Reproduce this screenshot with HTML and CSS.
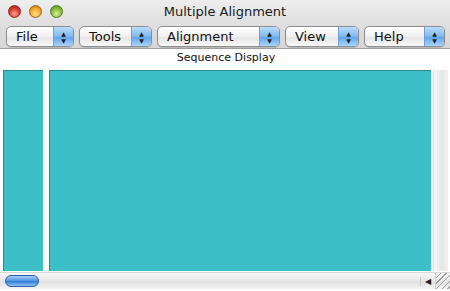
FILE: index.html
```html
<!DOCTYPE html>
<html lang="en">
<head>
  <meta charset="UTF-8" />
  <title>Multiple Alignment</title>
  <link rel="stylesheet" href="styles.css">
</head>
<body>
  <div class="window">
    <div class="titlebar">
      <div class="lights">
        <span class="light red"></span>
        <span class="light yellow"></span>
        <span class="light green"></span>
      </div>
      <div class="title">Multiple Alignment</div>
    </div>

    <div class="toolbar">
      <div class="popup w-file"><span class="label">File</span><span class="arrows">&#9650;<br>&#9660;</span></div>
      <div class="popup w-tools"><span class="label">Tools</span><span class="arrows">&#9650;<br>&#9660;</span></div>
      <div class="popup w-align"><span class="label">Alignment</span><span class="arrows">&#9650;<br>&#9660;</span></div>
      <div class="popup w-view"><span class="label">View</span><span class="arrows">&#9650;<br>&#9660;</span></div>
      <div class="popup w-help"><span class="label">Help</span><span class="arrows">&#9650;<br>&#9660;</span></div>
    </div>

    <div class="content">
      <div class="caption">Sequence Display</div>
      <div class="panels">
        <div class="panel names"></div>
        <div class="panel seqs"></div>
        <div class="vscroll"></div>
      </div>
      <div class="hscroll">
        <div class="thumb"></div>
        <div class="track"></div>
        <div class="arrow">&#9664;</div>
        <div class="grip"></div>
      </div>
    </div>
  </div>
</body>
</html>
```

FILE: styles.css
```css
/* Mac OS X style window */

body {
  margin: 0;
  font-family: "DejaVu Sans", "Liberation Sans", sans-serif;
  background: #ffffff;
}

.window {
  width: 450px;
  height: 291px;
  display: flex;
  flex-direction: column;
  overflow: hidden;
}

/* Title bar */
.titlebar {
  height: 22px;
  display: flex;
  align-items: center;
  position: relative;
  background: linear-gradient(#eeeeee, #e0e0e0);
}

.lights {
  display: flex;
  gap: 8px;
  padding: 1px 0 0 8px;
}

.light {
  width: 13px;
  height: 13px;
  border-radius: 50%;
  box-sizing: border-box;
}

.red {
  background: radial-gradient(circle at 50% 70%, #ff9c8c, #d1342a 60%, #9e1b12);
  border: 1px solid #8a2a22;
}

.yellow {
  background: radial-gradient(circle at 50% 70%, #ffe08a, #f0a024 60%, #b56d12);
  border: 1px solid #96661e;
}

.green {
  background: radial-gradient(circle at 50% 70%, #d6f29a, #7cb934 60%, #4d861a);
  border: 1px solid #4e7a22;
}

.title {
  position: absolute;
  left: 0;
  right: 0;
  top: 4px;
  text-align: center;
  font-size: 13px;
  color: #1a1a1a;
}

/* Toolbar with popup menus */
.toolbar {
  height: 27px;
  display: flex;
  align-items: flex-start;
  gap: 5px;
  padding: 4px 0 0 6px;
  box-sizing: border-box;
  background: linear-gradient(#e0e0e0, #d6d6d6);
  border-bottom: 1px solid #a0a0a0;
}

.popup {
  height: 21px;
  display: flex;
  box-sizing: border-box;
  border: 1px solid #8d8d8d;
  border-radius: 5px;
  background: linear-gradient(#ffffff, #f0f0f0 50%, #e4e4e4 51%, #f8f8f8);
  overflow: hidden;
  box-shadow: 0 1px 1px rgba(0, 0, 0, 0.15);
}

.label {
  flex: 1;
  font-size: 13px;
  line-height: 19px;
  padding-left: 9px;
  color: #111;
}

.arrows {
  width: 19px;
  font-size: 6px;
  line-height: 7px;
  padding-top: 3px;
  text-align: center;
  color: #1a1a1a;
  border-left: 1px solid #6f9fd6;
  background: linear-gradient(#bcdcfb, #7fb8f0 50%, #5ca2ea 51%, #a9d4fb);
}

.w-file { width: 68px; }
.w-tools { width: 73px; }
.w-align { width: 123px; }
.w-view { width: 74px; }
.w-help { width: 81px; }

/* Content */
.content {
  flex: 1;
  display: flex;
  flex-direction: column;
  background: #ffffff;
}

.caption {
  height: 21px;
  font-size: 11px;
  line-height: 17px;
  text-align: center;
  color: #111;
  margin-left: 2px;
}

.panels {
  display: flex;
  height: 201px;
  padding-left: 3px;
}

.panel {
  background: #3dbfc8;
  border-top: 1px solid #2a8a90;
  border-left: 1px solid #2a8a90;
  box-sizing: border-box;
}

.names {
  width: 40px;
}

.seqs {
  width: 382px;
  margin-left: 6px;
}

.vscroll {
  width: 14px;
  margin-left: 2px;
  background: linear-gradient(90deg, #f6f6f6, #e6e6e6 60%, #f2f2f2);
  border-left: 1px solid #e0e0e0;
}

.hscroll {
  height: 16px;
  margin-top: 1px;
  display: flex;
  align-items: center;
  background: linear-gradient(#f8f8f8, #e2e2e2 60%, #f4f4f4);
  border-top: 1px solid #d8d8d8;
}

.thumb {
  width: 34px;
  height: 12px;
  margin-left: 5px;
  border-radius: 6px;
  box-sizing: border-box;
  border: 1px solid #2f5fa8;
  background: linear-gradient(#a8cff6, #4d93e0 50%, #2d78d6 51%, #8cc2f4);
}

.track {
  flex: 1;
}

.arrow {
  width: 14px;
  font-size: 8px;
  color: #222;
  text-align: center;
  border-left: 1px solid #c8c8c8;
}

.grip {
  width: 14px;
  height: 16px;
  border-left: 1px solid #d0d0d0;
  background: repeating-linear-gradient(135deg, transparent 0 3px, #9a9a9a 3px 4px);
}
```
